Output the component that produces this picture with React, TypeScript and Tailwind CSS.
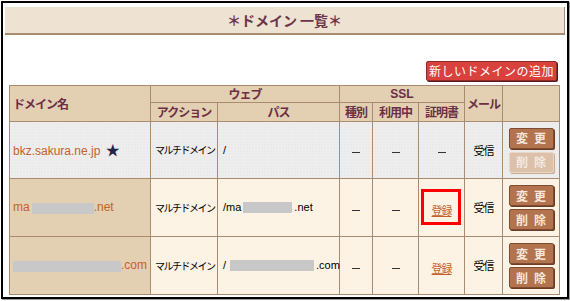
const JP = "font-['Noto_Sans_CJK_JP',sans-serif]"
const LAT = "font-['Liberation_Sans','Noto_Sans_CJK_JP',sans-serif]"

const th = 'border border-[#a98b70] bg-[#e3cfb1] text-[#6b2e44] font-bold text-[12px] tracking-[-1px] leading-none p-0'
const td = 'border border-[#a98b70] p-0 leading-none'
const dotted = 'bg-[#eeeeee] bg-[radial-gradient(#dddddd_1px,transparent_1px)] bg-[length:3px_3px]'
const cream = 'bg-[#fdf3e5]'

function Mask({ w }: { w: number }) {
  return <span className="inline-block h-[11px] bg-[#c8c8c8] align-middle" style={{ width: w }} />
}

function Btn({ label, off }: { label: string; off?: boolean }) {
  return (
    <div
      className={`w-[45px] h-[21px] flex items-center justify-center text-[12px] font-bold tracking-[6px] pl-[6px] rounded-[2px] border ${
        off
          ? 'bg-[#dcc0a9] border-[#e9d7c8] text-[#f3e9e1] shadow-[1px_1px_0_#c9ab93]'
          : 'bg-[#b3734e] border-[#7d4c31] text-[#f6e7dc] shadow-[1px_1px_0_#6a3c24]'
      }`}
    >
      {label}
    </div>
  )
}

function Btns({ disabled }: { disabled?: boolean }) {
  return (
    <div className="flex flex-col items-center gap-[3px]">
      <Btn label="変更" />
      <Btn label="削除" off={disabled} />
    </div>
  )
}

const Dash = () => <span className="inline-block w-[8px] h-[1px] bg-[#333] align-middle" />

export default function App() {
  return (
    <div className={`w-[570px] h-[301px] bg-white pt-[1px] pl-[1px] ${JP}`}>
      <div className="w-[568px] h-[298px] border-2 border-black shadow-[1px_1px_0_#9a9a9a]">
        <div className="mx-[2px] mt-[4px] h-[28px] bg-[#eee2d3] border-b-2 border-r border-[#a98b70] flex items-center justify-center text-[14px] font-bold text-[#6b3548]">
          ＊ドメイン 一覧＊
        </div>

        <div className="flex justify-end pr-[10px] mt-[26px]">
          <div className="h-[20px] w-[131px] bg-[#d8413c] border border-[#8b2b2b] shadow-[1px_1px_0_#5a1a1a] rounded-[2px] flex items-center justify-center text-white text-[12px] tracking-[0.5px]">
            新しいドメインの追加
          </div>
        </div>

        <table className="ml-[6px] mt-[4px] w-[550px] table-fixed border-collapse border border-[#a98b70]">
          <colgroup>
            <col className="w-[141px]" />
            <col className="w-[67px]" />
            <col className="w-[122px]" />
            <col className="w-[33px]" />
            <col className="w-[46px]" />
            <col className="w-[46px]" />
            <col className="w-[38px]" />
            <col className="w-[57px]" />
          </colgroup>
          <thead>
            <tr className="h-[17px]">
              <th rowSpan={2} className={`${th} text-left pl-[3px]`}>ドメイン名</th>
              <th colSpan={2} className={th}>ウェブ</th>
              <th colSpan={3} className={`${th} ${LAT} tracking-[0px]`}>SSL</th>
              <th rowSpan={2} className={th}>メール</th>
              <th rowSpan={2} className={th}></th>
            </tr>
            <tr className="h-[19px]">
              <th className={th}>アクション</th>
              <th className={th}>パス</th>
              <th className={th}>種別</th>
              <th className={th}>利用中</th>
              <th className={th}>証明書</th>
            </tr>
          </thead>
          <tbody>
            <tr className="h-[57px]">
              <td className={`${td} ${dotted} pl-[3px] ${LAT} text-[12px] text-[#c5602c]`}>
                bkz.sakura.ne.jp <span className="text-[#25254a] text-[14px] ml-[2px]">★</span>
              </td>
              <td className={`${td} ${dotted} pl-[4px] text-[10px] tracking-[-1.5px] text-black`}>マルチドメイン</td>
              <td className={`${td} ${dotted} pl-[5px] ${LAT} text-[11px] text-black`}>/</td>
              <td className={`${td} ${dotted} text-center`}><Dash /></td>
              <td className={`${td} ${dotted} text-center`}><Dash /></td>
              <td className={`${td} ${dotted} text-center`}><Dash /></td>
              <td className={`${td} ${dotted} text-center text-[11px] tracking-[-1px] text-black`}>受信</td>
              <td className={`${td} ${dotted}`}><Btns disabled /></td>
            </tr>
            <tr className="h-[58px]">
              <td className={`${td} bg-[#e3cfb1] pl-[3px] ${LAT} text-[12px] text-[#c5602c] whitespace-nowrap`}>
                ma<span className="ml-[2px]" /><Mask w={62} />.net
              </td>
              <td className={`${td} ${cream} pl-[4px] text-[10px] tracking-[-1.5px] text-black`}>マルチドメイン</td>
              <td className={`${td} ${cream} pl-[5px] ${LAT} text-[11px] text-black whitespace-nowrap`}>
                /ma<span className="ml-[2px]" /><Mask w={49} /><span className="ml-[2px]" />.net
              </td>
              <td className={`${td} ${cream} text-center`}><Dash /></td>
              <td className={`${td} ${cream} text-center`}><Dash /></td>
              <td className={`${td} ${cream} text-center relative`}>
                <span className="text-[11px] text-[#c5602c] underline tracking-[-1px]">登録</span>
                <div className="absolute left-[2px] top-[10px] w-[40px] h-[36px] border-[3px] border-[#ff0000]" />
              </td>
              <td className={`${td} ${cream} text-center text-[11px] tracking-[-1px] text-black`}>受信</td>
              <td className={`${td} ${cream}`}><Btns /></td>
            </tr>
            <tr className="h-[58px]">
              <td className={`${td} bg-[#e3cfb1] pl-[3px] ${LAT} text-[12px] text-[#c5602c] whitespace-nowrap`}>
                <Mask w={108} />.com
              </td>
              <td className={`${td} ${cream} pl-[4px] text-[10px] tracking-[-1.5px] text-black`}>マルチドメイン</td>
              <td className={`${td} ${cream} pl-[5px] ${LAT} text-[11px] text-black whitespace-nowrap`}>
                /<span className="ml-[4px]" /><Mask w={84} /><span className="ml-[2px]" />.com
              </td>
              <td className={`${td} ${cream} text-center`}><Dash /></td>
              <td className={`${td} ${cream} text-center`}><Dash /></td>
              <td className={`${td} ${cream} text-center`}>
                <span className="text-[11px] text-[#c5602c] underline tracking-[-1px]">登録</span>
              </td>
              <td className={`${td} ${cream} text-center text-[11px] tracking-[-1px] text-black`}>受信</td>
              <td className={`${td} ${cream}`}><Btns /></td>
            </tr>
          </tbody>
        </table>
      </div>
    </div>
  )
}
